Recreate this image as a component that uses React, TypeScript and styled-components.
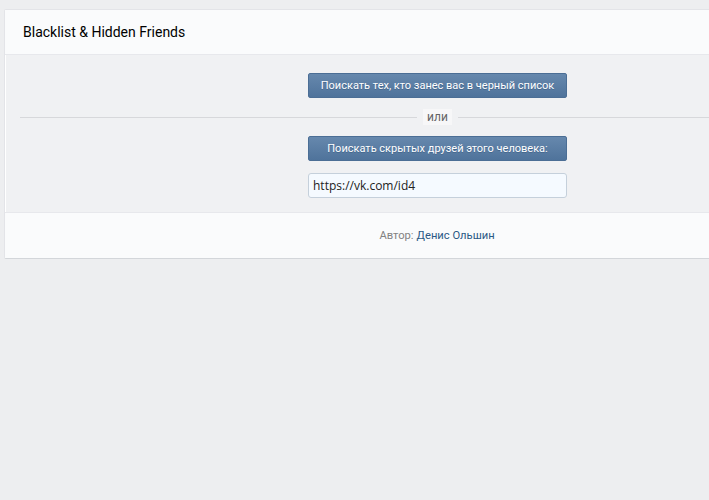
import React, { useState } from 'react';
import styled, { createGlobalStyle } from 'styled-components';

const GlobalStyle = createGlobalStyle`
  html, body {
    margin: 0;
    padding: 0;
    overflow: hidden;
    background: #edeef0;
  }
  body {
    font-family: Roboto, "Open Sans", "Liberation Sans", sans-serif;
    color: #000;
  }
`;

const Page = styled.div`
  padding: 9px 0 0 4px;
  min-height: 500px;
  box-sizing: border-box;
`;

const Card = styled.div`
  width: 866px;
  border: 1px solid #e3e4e8;
  border-bottom-color: #d3d6da;
  border-radius: 2px;
  background: #f0f1f3;
  box-sizing: border-box;
`;

const Header = styled.div`
  height: 44px;
  display: flex;
  align-items: center;
  padding: 0 18px;
  background: #fafbfc;
  border-bottom: 1px solid #e7e8ec;
`;

const Title = styled.h2`
  margin: 0;
  font-size: 14px;
  font-weight: 400;
  color: #000;
`;

const Body = styled.div`
  display: flex;
  flex-direction: column;
  align-items: center;
  padding: 18px 14px 14px;
  border-left: 1px solid #fff;
`;

const Button = styled.button`
  width: 259px;
  height: 25px;
  padding: 0;
  border: 1px solid #4b6e95;
  border-radius: 2px;
  background: linear-gradient(#6688ad, #4f739b);
  color: #fff;
  font-family: Roboto, "Liberation Sans", sans-serif;
  font-size: 11px;
  text-shadow: 0 1px 0 #45688e;
  cursor: pointer;
`;

const Divider = styled.div`
  align-self: stretch;
  display: flex;
  align-items: center;
  gap: 6px;
  margin: 11px 0;
  color: #656565;
  font-size: 12px;

  &::before,
  &::after {
    content: '';
    flex: 1;
    height: 1px;
    background: #d7d8db;
  }
`;

const Or = styled.span`
  padding: 1px 4px;
  background: #f7f7f8;
  line-height: 14px;
`;

const Input = styled.input`
  width: 259px;
  height: 25px;
  margin-top: 12px;
  padding: 0 4px;
  box-sizing: border-box;
  border: 1px solid #c5d0db;
  border-radius: 3px;
  background: #f5faff;
  color: #222;
  font-family: "Open Sans", Roboto, sans-serif;
  font-size: 12px;
  outline: none;
`;

const Footer = styled.div`
  height: 45px;
  display: flex;
  align-items: center;
  justify-content: center;
  gap: 3px;
  background: #fafbfc;
  border-top: 1px solid #e7e8ec;
  font-size: 11.2px;
  color: #828282;
`;

const Author = styled.a`
  color: #2a5885;
  text-decoration: none;
`;

export default function App() {
  const [link, setLink] = useState('https://vk.com/id4');

  return (
    <Page>
      <GlobalStyle />
      <Card>
        <Header>
          <Title>Blacklist &amp; Hidden Friends</Title>
        </Header>
        <Body>
          <Button>Поискать тех, кто занес вас в черный список</Button>
          <Divider>
            <Or>или</Or>
          </Divider>
          <Button>Поискать скрытых друзей этого человека:</Button>
          <Input value={link} onChange={(e) => setLink(e.target.value)} />
        </Body>
        <Footer>
          Автор: <Author href="#">Денис Ольшин</Author>
        </Footer>
      </Card>
    </Page>
  );
}
